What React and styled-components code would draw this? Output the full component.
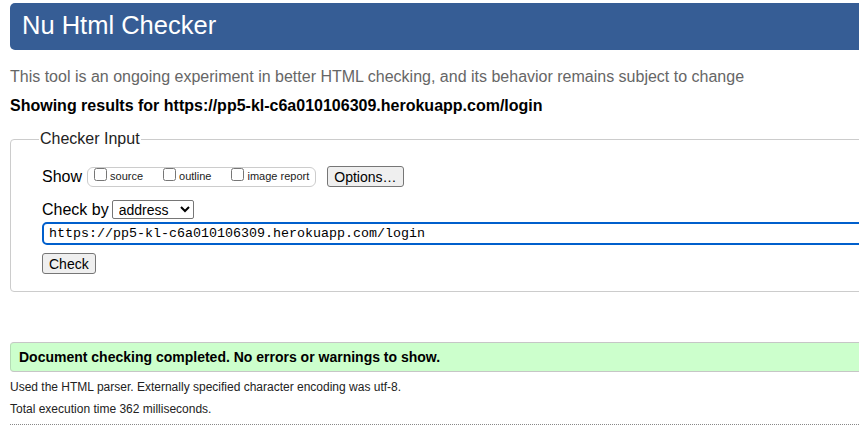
import React from "react";
import styled, { createGlobalStyle } from "styled-components";

const GlobalStyle = createGlobalStyle`
  html, body {
    margin: 0;
    padding: 0;
    background: #fff;
    overflow: hidden;
  }
  body {
    font-family: "Liberation Sans", Arial, sans-serif;
    color: #000;
  }
`;

const url = "https://pp5-kl-c6a010106309.herokuapp.com/login";

function App() {
  return (
    <>
      <GlobalStyle />
      <Page>
        <Header>
          <Title>Nu Html Checker</Title>
        </Header>
        <Intro>
          This tool is an ongoing experiment in better HTML checking, and its
          behavior remains subject to change
        </Intro>
        <ResultsFor>Showing results for {url}</ResultsFor>

        <Fieldset>
          <Legend>Checker Input</Legend>
          <Row>
            <RowLabel>Show</RowLabel>
            <OptionGroup>
              <Option>
                <Box type="checkbox" />
                source
              </Option>
              <Option>
                <Box type="checkbox" />
                outline
              </Option>
              <Option>
                <Box type="checkbox" />
                image report
              </Option>
            </OptionGroup>
            <Button>Options…</Button>
          </Row>
          <Row $top={13}>
            <RowLabel $tight>Check by</RowLabel>
            <Select defaultValue="address">
              <option value="address">address</option>
            </Select>
          </Row>
          <UrlInput defaultValue={url} />
          <Button>Check</Button>
        </Fieldset>

        <Success>Document checking completed. No errors or warnings to show.</Success>
        <Details>
          Used the HTML parser. Externally specified character encoding was utf-8.
        </Details>
        <Details>Total execution time 362 milliseconds.</Details>
        <Rule />
      </Page>
    </>
  );
}

const Page = styled.div`
  padding: 3px 0 0 10px;
  width: calc(100% + 40px);
  box-sizing: border-box;
`;

const Header = styled.header`
  background: #365d95;
  border-radius: 5px;
  height: 47px;
  display: flex;
  align-items: center;
  padding-left: 12px;
`;

const Title = styled.h1`
  margin: 0;
  color: #fff;
  font-size: 25.5px;
  font-weight: normal;
  line-height: 1;
  position: relative;
  top: -1px;
`;

const Intro = styled.p`
  margin: 18px 0 0;
  color: #666;
  font-size: 16px;
  line-height: 18px;
`;

const ResultsFor = styled.p`
  margin: 11px 0 0;
  font-size: 16px;
  font-weight: bold;
  line-height: 18px;
`;

const Fieldset = styled.fieldset`
  margin: 15px 0 0;
  padding: 18px 31px 17px;
  border: 1px solid #ccc;
  border-radius: 4px;
  min-width: 0;
`;

const Legend = styled.legend`
  padding: 0 1px;
  margin-left: -3px;
  font-size: 16px;
  color: #222;
`;

const Row = styled.div`
  display: flex;
  align-items: center;
  margin-top: ${(p) => p.$top || 0}px;
`;

const RowLabel = styled.span`
  font-size: 16px;
  margin-right: ${(p) => (p.$tight ? 3 : 5)}px;
`;

const OptionGroup = styled.div`
  display: flex;
  align-items: center;
  border: 1px solid #ccc;
  border-radius: 6px;
  height: 18px;
  padding: 0 6px;
  gap: 20px;
  margin-right: 11px;
`;

const Option = styled.label`
  display: flex;
  align-items: flex-end;
  font-size: 11px;
  line-height: 13px;
  color: #222;
`;

const Box = styled.input`
  width: 13px;
  height: 13px;
  margin: 0 3px 0 0;
  position: relative;
  top: -2px;
`;

const Button = styled.button`
  font-family: "Liberation Sans", Arial, sans-serif;
  font-size: 14px;
  height: 21px;
  padding: 0 6px;
  background: #efefef;
  border: 1px solid #767676;
  border-radius: 3px;
  color: #000;
`;

const Select = styled.select`
  font-family: "Liberation Sans", Arial, sans-serif;
  font-size: 14px;
  height: 19px;
  width: 82px;
  padding: 0 2px;
  border: 1px solid #767676;
  border-radius: 2px;
  background: #fff;
  color: #000;
`;

const UrlInput = styled.input`
  display: block;
  box-sizing: border-box;
  width: calc(100% + 40px);
  height: 23px;
  margin: 3px 0 8px;
  padding: 0 5px;
  font-family: "Liberation Mono", "Courier New", monospace;
  font-size: 13.33px;
  color: #000;
  border: 2px solid #005fcc;
  border-radius: 5px;
  outline: none;
`;

const Success = styled.div`
  margin-top: 50px;
  background: #ccffcc;
  border: 1px solid #c6c6c6;
  border-left-color: #b5dcb5;
  border-radius: 4px 0 0 4px;
  height: 28px;
  display: flex;
  align-items: center;
  padding-left: 8px;
  font-size: 14px;
  font-weight: bold;
`;

const Details = styled.p`
  margin: 8px 0 0;
  font-size: 12px;
  line-height: 14px;
  color: #222;
`;

const Rule = styled.hr`
  margin: 8px 0 0;
  border: 0;
  border-top: 1px dotted #888;
`;

export default App;
